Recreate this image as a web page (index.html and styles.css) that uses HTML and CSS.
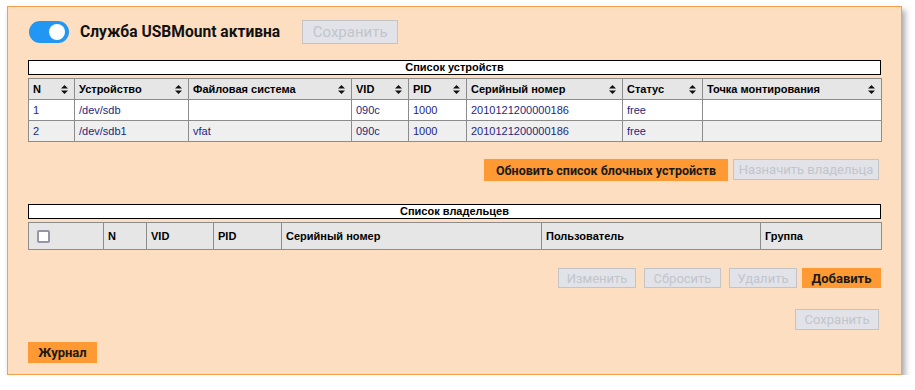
FILE: index.html
```html
<!DOCTYPE html>
<html lang="ru">
<head>
<meta charset="utf-8">
<title>USBMount</title>
<link rel="stylesheet" href="styles.css">
</head>
<body>
<div class="panel">
  <div class="top-row">
    <span class="toggle"><span class="knob"></span></span>
    <span class="service-label">Служба USBMount активна</span>
    <button class="btn btn-disabled btn-big">Сохранить</button>
  </div>

  <div class="caption caption-devices">Список устройств</div>
  <table class="grid devices">
    <colgroup>
      <col style="width:46px"><col style="width:114px"><col style="width:163px"><col style="width:57px">
      <col style="width:58px"><col style="width:156px"><col style="width:80px"><col style="width:179px">
    </colgroup>
    <thead>
      <tr>
        <th><div class="th-in"><span>N</span><svg class="sort" viewBox="0 0 7 9"><path d="M0 3.6L3.5 0L7 3.6Z M0 5.4L3.5 9L7 5.4Z"/></svg></div></th>
        <th><div class="th-in"><span>Устройство</span><svg class="sort" viewBox="0 0 7 9"><path d="M0 3.6L3.5 0L7 3.6Z M0 5.4L3.5 9L7 5.4Z"/></svg></div></th>
        <th><div class="th-in"><span>Файловая система</span><svg class="sort" viewBox="0 0 7 9"><path d="M0 3.6L3.5 0L7 3.6Z M0 5.4L3.5 9L7 5.4Z"/></svg></div></th>
        <th><div class="th-in"><span>VID</span><svg class="sort" viewBox="0 0 7 9"><path d="M0 3.6L3.5 0L7 3.6Z M0 5.4L3.5 9L7 5.4Z"/></svg></div></th>
        <th><div class="th-in"><span>PID</span><svg class="sort" viewBox="0 0 7 9"><path d="M0 3.6L3.5 0L7 3.6Z M0 5.4L3.5 9L7 5.4Z"/></svg></div></th>
        <th><div class="th-in"><span>Серийный номер</span><svg class="sort" viewBox="0 0 7 9"><path d="M0 3.6L3.5 0L7 3.6Z M0 5.4L3.5 9L7 5.4Z"/></svg></div></th>
        <th><div class="th-in"><span>Статус</span><svg class="sort" viewBox="0 0 7 9"><path d="M0 3.6L3.5 0L7 3.6Z M0 5.4L3.5 9L7 5.4Z"/></svg></div></th>
        <th><div class="th-in"><span>Точка монтирования</span><svg class="sort" viewBox="0 0 7 9"><path d="M0 3.6L3.5 0L7 3.6Z M0 5.4L3.5 9L7 5.4Z"/></svg></div></th>
      </tr>
    </thead>
    <tbody>
      <tr class="odd">
        <td>1</td><td>/dev/sdb</td><td></td><td>090c</td><td>1000</td><td>2010121200000186</td><td>free</td><td></td>
      </tr>
      <tr class="even">
        <td>2</td><td>/dev/sdb1</td><td>vfat</td><td>090c</td><td>1000</td><td>2010121200000186</td><td>free</td><td></td>
      </tr>
    </tbody>
  </table>

  <div class="btn-row row-devices">
    <button class="btn btn-primary btn-wide">Обновить список блочных устройств</button>
    <button class="btn btn-disabled btn-assign">Назначить владельца</button>
  </div>

  <div class="caption caption-owners">Список владельцев</div>
  <table class="grid owners">
    <colgroup>
      <col style="width:75px"><col style="width:43px"><col style="width:67px"><col style="width:68px">
      <col style="width:260px"><col style="width:219px"><col style="width:121px">
    </colgroup>
    <thead>
      <tr>
        <th class="check-cell"><span class="checkbox"></span></th>
        <th>N</th>
        <th>VID</th>
        <th>PID</th>
        <th>Серийный номер</th>
        <th>Пользователь</th>
        <th>Группа</th>
      </tr>
    </thead>
  </table>

  <div class="btn-row row-owners">
    <button class="btn btn-disabled btn-edit">Изменить</button>
    <button class="btn btn-disabled btn-reset">Сбросить</button>
    <button class="btn btn-disabled btn-del">Удалить</button>
    <button class="btn btn-primary btn-add">Добавить</button>
  </div>

  <div class="btn-row row-save">
    <button class="btn btn-disabled btn-save">Сохранить</button>
  </div>

  <div class="btn-row row-log">
    <button class="btn btn-primary btn-log">Журнал</button>
  </div>
</div>
</body>
</html>
```

FILE: styles.css
```css
html, body {
  margin: 0;
  padding: 0;
  background: #ffffff;
}

body {
  font-family: "Liberation Sans", Arial, sans-serif;
}

.panel {
  box-sizing: border-box;
  width: 895px;
  height: 369px;
  margin: 6px 0 0 7px;
  padding: 13px 20px 0 20px;
  background: #fedec0;
  border: 1px solid #f5a04e;
  box-shadow: 3px 4px 6px rgba(0, 0, 0, 0.35);
}

.top-row {
  display: flex;
  align-items: center;
  height: 24px;
}

.toggle {
  position: relative;
  display: inline-block;
  width: 40px;
  height: 22px;
  border-radius: 11px;
  background: #2196f3;
  margin-left: 1px;
}

.knob {
  position: absolute;
  top: 3px;
  right: 4px;
  width: 16px;
  height: 16px;
  border-radius: 50%;
  background: #ffffff;
}

.service-label {
  margin-left: 11px;
  font-family: Roboto, "Liberation Sans", sans-serif;
  font-weight: bold;
  font-size: 15.6px;
  color: #111;
}

.btn {
  box-sizing: border-box;
  font-family: Roboto, "Liberation Sans", sans-serif;
  font-size: 13px;
  padding: 0;
  margin: 0;
  cursor: default;
}

.btn-disabled {
  background: #e1e3e8;
  border: 1px solid #c4c4c4;
  color: #c2c5cc;
}

.btn-primary {
  background: #ff9933;
  border: none;
  color: #1a1a1a;
  font-weight: bold;
}

.btn-big {
  width: 96px;
  height: 24px;
  font-size: 15px;
  margin-left: 22px;
}

.caption {
  box-sizing: border-box;
  height: 15px;
  border: 1px solid #000;
  background: #ffffff;
  text-align: center;
  font-weight: bold;
  font-size: 11px;
  line-height: 13px;
  color: #000;
}

.caption-devices {
  margin-top: 16px;
}

.caption-owners {
  margin-top: 23px;
}

.grid {
  width: 853px;
  table-layout: fixed;
  border-collapse: collapse;
  margin-top: 3px;
  font-size: 11px;
}

.grid th,
.grid td {
  border: 1px solid #8c8c8c;
  padding: 0 4px;
  text-align: left;
  white-space: nowrap;
  overflow: hidden;
}

.grid th {
  background: #e6e6e6;
  font-weight: bold;
  color: #000;
}

.devices th {
  height: 20px;
  padding-right: 6px;
}

.th-in {
  display: flex;
  align-items: center;
  justify-content: space-between;
}

.sort {
  width: 7px;
  height: 9px;
  fill: #111;
  flex: none;
}

.devices td {
  height: 20px;
  color: #1f1f80;
}

.devices tr.odd td {
  background: #ffffff;
}

.devices tr.even td {
  background: #efefef;
}

.owners th {
  height: 26px;
}

.owners th.check-cell {
  padding-left: 8px;
}

.checkbox {
  display: inline-block;
  box-sizing: border-box;
  width: 13px;
  height: 13px;
  border: 2px solid #9595a6;
  border-radius: 2px;
  background: #fff;
  vertical-align: middle;
}

.btn-row {
  display: flex;
  justify-content: flex-end;
  gap: 7px;
}

.row-devices {
  margin-top: 17px;
  gap: 5px;
  padding-right: 2px;
}

.btn-wide {
  width: 244px;
  height: 22px;
  font-size: 12.5px;
}

.btn-assign {
  width: 146px;
  height: 21px;
}

.row-owners {
  margin-top: 18px;
  gap: 8px;
}

.btn-edit {
  width: 78px;
  height: 20px;
}

.btn-reset {
  width: 77px;
  height: 20px;
}

.btn-del {
  width: 68px;
  height: 20px;
  margin-right: -3px;
}

.btn-add {
  width: 79px;
  height: 20px;
}

.row-save {
  margin-top: 21px;
  padding-right: 2px;
}

.btn-save {
  width: 84px;
  height: 21px;
}

.row-log {
  margin-top: 12px;
  justify-content: flex-start;
}

.btn-log {
  width: 69px;
  height: 21px;
}
```
